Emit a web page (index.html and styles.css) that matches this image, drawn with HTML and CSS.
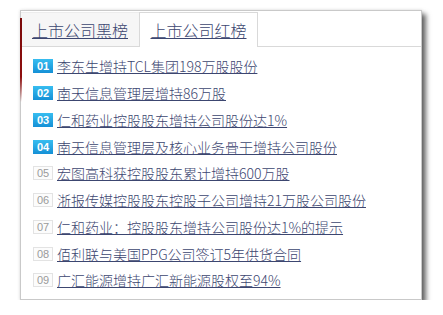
FILE: index.html
```html
<!DOCTYPE html>
<html lang="zh-CN">
<head>
    <meta charset="UTF-8">
    <title>上市公司红黑榜</title>
    <link rel="stylesheet" href="styles.css">
</head>
<body>
    <div class="board">
        <span class="mark"></span>
        <div class="tabs">
            <a class="tab" href="#">上市公司黑榜</a>
            <a class="tab active" href="#">上市公司红榜</a>
        </div>
        <ul class="list">
            <li><span class="num top">01</span><a href="#">李东生增持TCL集团198万股股份</a></li>
            <li><span class="num top">02</span><a href="#">南天信息管理层增持86万股</a></li>
            <li><span class="num top">03</span><a href="#">仁和药业控股股东增持公司股份达1%</a></li>
            <li><span class="num top">04</span><a href="#">南天信息管理层及核心业务骨干增持公司股份</a></li>
            <li><span class="num">05</span><a href="#">宏图高科获控股股东累计增持600万股</a></li>
            <li><span class="num">06</span><a href="#">浙报传媒控股股东控股子公司增持21万股公司股份</a></li>
            <li><span class="num">07</span><a href="#">仁和药业：控股股东增持公司股份达1%的提示</a></li>
            <li><span class="num">08</span><a href="#">佰利联与美国PPG公司签订5年供货合同</a></li>
            <li><span class="num">09</span><a href="#">广汇能源增持广汇新能源股权至94%</a></li>
        </ul>
    </div>
</body>
</html>
```

FILE: styles.css
```css
body {
    margin: 0;
    background: #fff;
    font-family: "Noto Sans CJK SC", "Liberation Sans", sans-serif;
}
.board {
    position: relative;
    margin: 10px 0 0 20px;
    width: 400px;
    height: 288px;
    background: #fff;
    border: 1px solid #c9c9c9;
    box-shadow: 4px 4px 5px rgba(0, 0, 0, 0.6), 0 0 3px rgba(0, 0, 0, 0.12);
}
.mark {
    position: absolute;
    left: -1px;
    top: 7px;
    width: 2px;
    height: 84px;
    background: linear-gradient(#7a0a0a, #8e0f0f 70%, rgba(142, 15, 15, 0));
}
.tabs {
    display: flex;
    padding-top: 1px;
    border-bottom: 1px solid #d9d9d9;
    height: 34px;
}
.tab {
    width: 118px;
    height: 34px;
    line-height: 34px;
    text-align: center;
    font-size: 16px;
    font-weight: 300;
    color: #3c4670;
    background: #f6f6f6;
    box-sizing: border-box;
    border-top: 1px solid #ececec;
}
.tab.active {
    width: 119px;
    height: 35px;
    background: #fff;
    border: 1px solid #d9d9d9;
    border-bottom: none;
}
.list {
    list-style: none;
    margin: 0;
    padding: 6px 0 0 12px;
}
.list li {
    display: flex;
    align-items: center;
    height: 26.75px;
}
.list a {
    font-size: 14px;
    font-weight: 300;
    color: #3c4670;
}
.num {
    width: 20px;
    height: 14px;
    margin-right: 4px;
    box-sizing: border-box;
    border: 1px solid #e3e3e3;
    background: #fcfcfc;
    color: #9a9a9a;
    font-family: "Liberation Sans", sans-serif;
    font-size: 11px;
    line-height: 12px;
    text-align: center;
}
.num.top {
    border: none;
    background: linear-gradient(#37bdf0, #1590d6);
    color: #fff;
    font-weight: bold;
    line-height: 14px;
}
```
